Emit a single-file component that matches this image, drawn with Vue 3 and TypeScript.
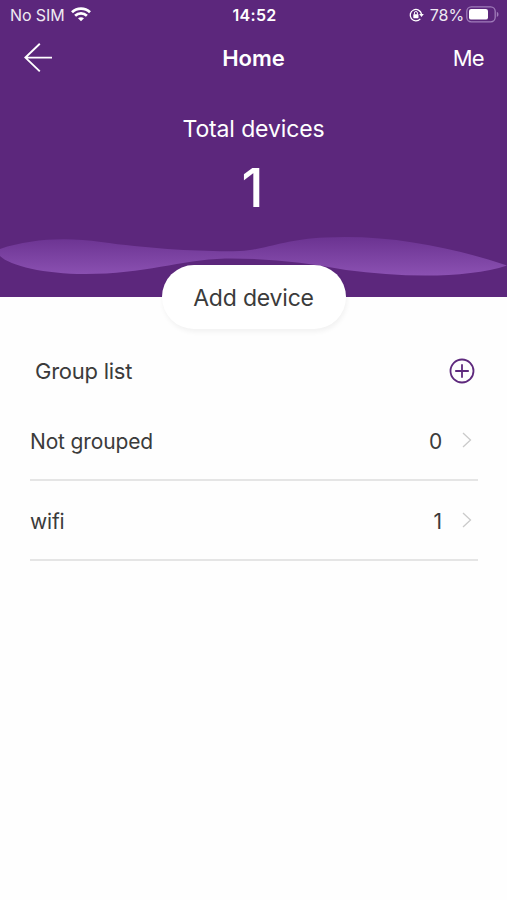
<script setup lang="ts">
interface DeviceGroup {
  name: string
  count: number
}

const groups: DeviceGroup[] = [
  { name: 'Not grouped', count: 0 },
  { name: 'wifi', count: 1 },
]
const totalDevices = 1
</script>

<template>
  <div class="screen">
    <header class="hero">
      <div class="status">
        <div class="status-left">
          <span class="carrier">No SIM</span>
          <svg class="wifi" width="20" height="15" viewBox="0 0 20 15">
            <g fill="none" stroke="#fff" stroke-width="2.7">
              <path d="M1 5.2C6 .3 14 .3 19 5.2" />
              <path d="M4.1 8.7C7.5 5.5 12.5 5.5 15.9 8.7" />
            </g>
            <path d="M7 11.3C8.7 9.9 11.3 9.9 13 11.3L10 14.3Z" fill="#fff" />
          </svg>
        </div>
        <span class="clock">14:52</span>
        <div class="status-right">
          <svg class="lock" width="15" height="14" viewBox="0 0 15 14">
            <path d="M11.3 10.8A5.7 5.7 0 1 1 12.5 6" fill="none" stroke="#fff" stroke-width="1.3" />
            <path d="M10.2 6H14.8L12.5 9Z" fill="#fff" />
            <rect x="4.3" y="6.2" width="5.2" height="4" rx=".6" fill="#fff" />
            <path d="M5.4 6.5V5A1.5 1.5 0 0 1 8.4 5V6.5" fill="none" stroke="#fff" />
          </svg>
          <span class="percent">78%</span>
          <svg class="battery" width="33" height="17" viewBox="0 0 33 17">
            <rect x=".8" y=".8" width="28.4" height="15" rx="4.5" fill="none" stroke="#a07dba" stroke-width="1.3" />
            <rect x="3" y="3" width="19" height="10.6" rx="2.2" fill="#fff" />
            <path d="M30.8 5.8C33 6.5 33 10.2 30.8 11Z" fill="#a07dba" />
          </svg>
        </div>
      </div>

      <nav class="nav">
        <button class="back" aria-label="Back">
          <svg width="30" height="30" viewBox="0 0 30 30" fill="none" stroke="#fff" stroke-width="1.9">
            <path d="M16.8 .8L2.4 14.6L16.8 28.4M2.4 14.6H29" />
          </svg>
        </button>
        <h1 class="title">Home</h1>
        <span class="me">Me</span>
      </nav>

      <p class="total-label">Total devices</p>
      <p class="total">{{ totalDevices }}</p>

      <svg class="wave" width="507" height="44" viewBox="0 0 507 44">
        <defs>
          <linearGradient id="wave-fill" x1="0" y1="0" x2="0" y2="1">
            <stop offset="0" stop-color="#6b3391" />
            <stop offset="1" stop-color="#8b51b2" />
          </linearGradient>
        </defs>
        <path
          d="M0 13C30 3 65 1 101 6C151 13 206 16 240 15C265 14 285 3 325 1.5C390-2 455 12 507 29.5C470 42 405 42 346 34C305 26 265 22 225 22.500C180 24 145 38 85 38C45 38 10 30 0 20Z"
          fill="url(#wave-fill)"
        />
      </svg>
    </header>

    <button class="add">Add device</button>

    <main class="content">
      <div class="group-head">
        <h2 class="group-title">Group list</h2>
        <svg class="plus" width="26" height="26" viewBox="0 0 26 26" fill="none" stroke="#5e297d" stroke-width="1.8">
          <circle cx="13" cy="13" r="11.5" />
          <path d="M13 6.2V19.8M6.2 13H19.8" />
        </svg>
      </div>
      <ul class="groups">
        <li v-for="group in groups" :key="group.name" class="row">
          <span class="name">{{ group.name }}</span>
          <span class="count">{{ group.count }}</span>
          <svg class="chevron" width="10" height="16" viewBox="0 0 10 16" fill="none" stroke="#cacaca" stroke-width="1.3">
            <path d="M1 1L8.5 8L1 15" />
          </svg>
        </li>
      </ul>
    </main>
  </div>
</template>

<style>
body {
  background: #fefefe;
}
</style>

<style scoped>
.screen {
  display: flex;
  flex-direction: column;
  align-items: center;
  height: 900px;
  overflow: hidden;
  background: #fefefe;
  color: #3b3b3b;
  font-family: Inter, 'Liberation Sans', sans-serif;
}
button {
  padding: 0;
  border: 0;
  background: none;
  color: inherit;
  font-family: inherit;
}
svg {
  display: block;
  flex: none;
}
h1, h2, p, ul {
  margin: 0;
  padding: 0;
  font-weight: 400;
}
.hero {
  flex: none;
  box-sizing: border-box;
  width: 100%;
  height: 297px;
  background: #5c277c;
  color: #fff;
}
.status {
  display: grid;
  grid-template-columns: 1fr auto 1fr;
  align-items: center;
  height: 29px;
  padding: 0 8px 0 10px;
  font-size: 16px;
  line-height: 31px;
}
.status-left,
.status-right {
  display: flex;
  align-items: center;
  height: 29px;
}
.carrier {
  width: 54px;
  white-space: nowrap;
  letter-spacing: -0.1px;
  opacity: 0.9;
}
.wifi {
  margin: 0 0 2px 7px;
}
.clock {
  font-weight: 600;
  letter-spacing: 0.3px;
}
.status-right {
  justify-content: flex-end;
}
.lock,
.battery {
  margin-bottom: 2px;
}
.percent {
  margin: 0 2px 0 6px;
  letter-spacing: -0.1px;
  opacity: 0.9;
}
.nav {
  display: grid;
  grid-template-columns: 1fr auto 1fr;
  align-items: center;
  height: 57px;
  padding: 0 23px;
  font-size: 22px;
}
.title {
  font-size: 22px;
  font-weight: 600;
}
.me {
  letter-spacing: -0.7px;
  text-align: right;
}
.total-label {
  height: 30px;
  margin-top: 28px;
  font-size: 23px;
  letter-spacing: -0.13px;
  line-height: 30px;
  text-align: center;
}
.total {
  height: 64px;
  margin-top: 12px;
  padding-right: 2px;
  font-size: 53px;
  font-weight: 550;
  line-height: 64px;
  text-align: center;
}
.wave {
  width: 100%;
  margin-top: 16px;
}
.add {
  position: relative;
  flex: none;
  width: 184px;
  height: 64px;
  margin-top: -32px;
  padding-top: 2px;
  border-radius: 32px;
  background: #fff;
  box-shadow: 1px 3px 5px rgba(0, 0, 0, 0.05);
  font-size: 23px;
  letter-spacing: -0.2px;
}
.content {
  box-sizing: border-box;
  width: 100%;
  padding: 21px 29px 0 30px;
}
.group-head {
  display: flex;
  align-items: center;
  justify-content: space-between;
  height: 42px;
  padding: 0 3px 0 5px;
}
.group-title {
  padding-bottom: 1px;
  font-size: 22px;
  letter-spacing: -0.25px;
}
.groups {
  margin-top: 9px;
  list-style: none;
}
.row {
  display: flex;
  align-items: center;
  box-sizing: border-box;
  height: 80px;
  padding-top: 2px;
  border-bottom: 2px solid #e5e5e5;
  font-size: 21px;
  letter-spacing: -0.15px;
}
.count {
  margin-left: auto;
}
.chevron {
  margin: 0 6px 2px 20px;
}
</style>
